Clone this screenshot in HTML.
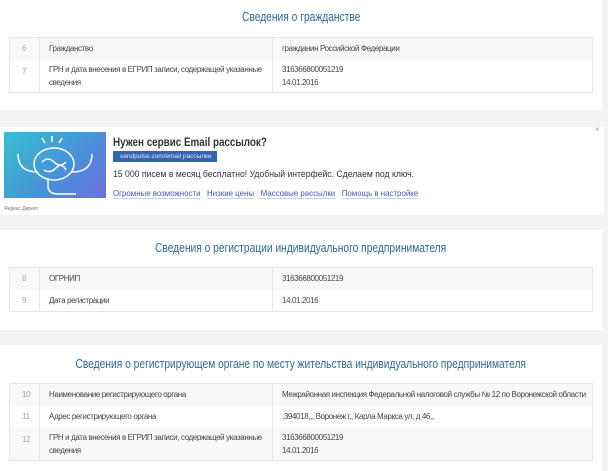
<!DOCTYPE html>
<html><head><meta charset="utf-8"><style>
*{margin:0;padding:0;box-sizing:border-box}
body{width:608px;height:471px;background:#f2f3f4;font-family:"Liberation Sans",sans-serif;position:relative;overflow:hidden}
.p{position:absolute;left:0;width:602px;background:#fff}
.t{position:absolute;left:0;width:602px;text-align:center;color:#2e6a96;font-size:12.5px}
.t span{display:inline-block;transform:scaleX(.82)}
table{position:absolute;left:9px;width:584px;border-collapse:collapse;font-size:8px;letter-spacing:-0.38px;color:#444;border:1px solid #e6e6e6;table-layout:fixed}
td{border-right:1px solid #e6e6e6;padding:0 0 0 9px;vertical-align:middle;line-height:13px;white-space:nowrap}
td:first-child{width:30px;color:#9aa7b3;padding-left:12px}
td:nth-child(2){width:233px;white-space:normal}
tr:nth-child(odd){background:#f8f8f8}
.ad{position:absolute;left:0;top:127px;width:604px;height:88px;background:#fff}
a{color:#3b5cad;text-decoration:none;border-bottom:1px solid #c9d3ea}
</style></head><body>
<div class="p" style="top:0;height:110px"></div>
<div class="t" style="top:10px"><span>Сведения о гражданстве</span></div>
<table style="top:37px"><tr style="height:22px"><td>6</td><td>Гражданство</td><td>гражданин Российской Федерации</td></tr>
<tr style="height:33px;background:#fff"><td style="vertical-align:top;padding-top:5px">7</td><td>ГРН и дата внесения в ЕГРИП записи, содержащей указанные сведения</td><td>316366800051219<br>14.01.2016</td></tr></table>

<div class="ad">
<div style="position:absolute;left:4px;top:5px;width:102px;height:66px;background:linear-gradient(135deg,#35c0d0,#4a8fd8 60%,#6d6fe0)">
<svg width="102" height="66" viewBox="0 0 102 66" fill="none" stroke="#fff" stroke-width="1.5"><ellipse cx="50" cy="32" rx="20" ry="16"/><path d="M38 30q6-6 12 0t12 0M40 38q6 4 12-2t10 2M14 22q0 18 20 18M88 22q0 18-20 18M44 46v8q0 8 10 8h18"/><path d="M48 4v6M38 6l3 5M58 6l-3 5"/></svg></div>
<div style="position:absolute;left:113px;top:8px;font-size:12px;font-weight:bold;color:#333;transform:scaleX(.82);transform-origin:0 0;white-space:nowrap">Нужен сервис Email рассылок?</div>
<div style="position:absolute;left:113px;top:24px;width:104px;height:11px;background:#3463b0;color:#dfe8f8;font-size:6.5px;line-height:11px;padding-left:7px;white-space:nowrap">sendpulse.com/email рассылки</div>
<div style="position:absolute;left:113px;top:42px;font-size:9.5px;color:#333;transform:scaleX(.91);transform-origin:0 0;white-space:nowrap">15 000 писем в месяц бесплатно! Удобный интерфейс. Сделаем под ключ.</div>
<div style="position:absolute;left:113px;top:61px;font-size:8.3px;transform:scaleX(.95);transform-origin:0 0;white-space:nowrap"><a>Огромные возможности</a>&nbsp;&nbsp;&nbsp;<a>Низкие цены</a>&nbsp;&nbsp;&nbsp;<a>Массовые рассылки</a>&nbsp;&nbsp;&nbsp;<a>Помощь в настройке</a></div>
<div style="position:absolute;left:4px;top:79px;font-size:5px;color:#777">Яндекс.Директ</div>
<div style="position:absolute;left:595px;top:-2px;font-size:8px;color:#999">×</div>
</div>

<div class="p" style="top:230px;height:100px"></div>
<div class="t" style="top:241px"><span>Сведения о регистрации индивидуального предпринимателя</span></div>
<table style="top:267px"><tr style="height:22px"><td>8</td><td>ОГРНИП</td><td>316366800051219</td></tr>
<tr style="height:22px;background:#fff"><td>9</td><td>Дата регистрации</td><td>14.01.2016</td></tr></table>

<div class="p" style="top:345px;height:126px"></div>
<div class="t" style="top:357px"><span>Сведения о регистрирующем органе по месту жительства индивидуального предпринимателя</span></div>
<table style="top:383px"><tr style="height:22px"><td>10</td><td>Наименование регистрирующего органа</td><td>Межрайонная инспекция Федеральной налоговой службы № 12 по Воронежской области</td></tr>
<tr style="height:22px;background:#fff"><td>11</td><td>Адрес регистрирующего органа</td><td>,394018,,, Воронеж г,, Карла Маркса ул, д 46,,</td></tr>
<tr style="height:33px"><td style="vertical-align:top;padding-top:5px">12</td><td>ГРН и дата внесения в ЕГРИП записи, содержащей указанные сведения</td><td>316366800051219<br>14.01.2016</td></tr></table>
</body></html>
